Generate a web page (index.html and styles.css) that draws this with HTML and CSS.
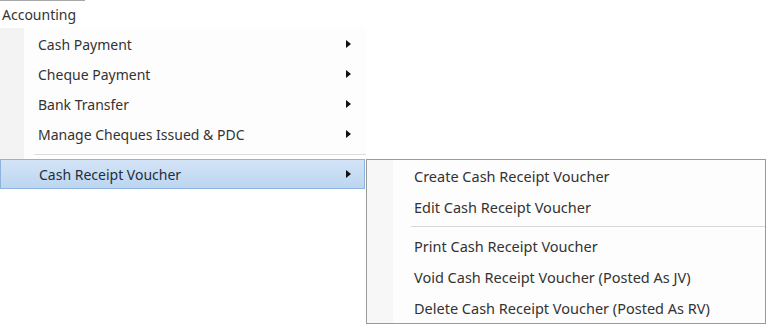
FILE: index.html
```html
<!DOCTYPE html>
<html lang="en">
<head>
    <meta charset="UTF-8">
    <title>Accounting Menu</title>
    <link rel="stylesheet" href="styles.css">
</head>
<body>
    <div class="tab">Accounting</div>

    <div class="menus">
        <ul class="menu">
            <li class="item has-sub">Cash Payment</li>
            <li class="item has-sub">Cheque Payment</li>
            <li class="item has-sub">Bank Transfer</li>
            <li class="item has-sub">Manage Cheques Issued &amp; PDC</li>
            <li class="sep"></li>
            <li class="item has-sub active">Cash Receipt Voucher</li>
        </ul>

        <ul class="submenu">
            <li class="item">Create Cash Receipt Voucher</li>
            <li class="item">Edit Cash Receipt Voucher</li>
            <li class="sep"></li>
            <li class="item">Print Cash Receipt Voucher</li>
            <li class="item">Void Cash Receipt Voucher (Posted As JV)</li>
            <li class="item">Delete Cash Receipt Voucher (Posted As RV)</li>
        </ul>
    </div>
</body>
</html>
```

FILE: styles.css
```css
body {
    margin: 0;
    background: #fff;
    font-family: "Noto Sans", "DejaVu Sans", sans-serif;
    font-size: 14px;
    color: #333;
    width: 768px;
    height: 326px;
    overflow: hidden;
}
ul {
    list-style: none;
    margin: 0;
    padding: 0;
}
.tab {
    width: 85px;
    height: 28px;
    box-sizing: border-box;
    border-top: 1px solid #a8a8a8;
    padding: 4px 0 0 2px;
    line-height: 20px;
}
.menus {
    display: flex;
    align-items: flex-start;
}
.menu {
    width: 366px;
    padding-top: 1px;
    background: linear-gradient(to right, #f3f3f3 24px, #fdfdfd 24px);
}
.menu .item {
    height: 30px;
    line-height: 31px;
    padding-left: 38px;
    position: relative;
}
.menu .sep {
    height: 10px;
    margin-left: 34px;
    background: linear-gradient(#fdfdfd 5px, #dcdcdc 5px, #dcdcdc 6px, #fff 6px);
}
.menu .active {
    background: linear-gradient(#d3e4f7, #bcd5f0);
    border: 1px solid #8eb3de;
    height: 28px;
    line-height: 29px;
    margin-right: 1px;
    color: #1f2d3d;
}
.has-sub::after {
    content: "";
    position: absolute;
    left: 346px;
    top: 50%;
    margin-top: -4px;
    border-left: 5px solid #111;
    border-top: 4px solid transparent;
    border-bottom: 4px solid transparent;
}
.menu .active::after {
    left: 345px;
}
.submenu {
    width: 400px;
    box-sizing: border-box;
    margin-top: 131px;
    border: 1px solid #9a9a9a;
    background: linear-gradient(to right, #f7f7f7 26px, #fdfdfd 26px);
}
.submenu .item {
    height: 31px;
    line-height: 32px;
    padding-left: 47px;
    font-size: 14.5px;
}
.submenu .sep {
    height: 8px;
    margin-left: 44px;
    background: linear-gradient(#fdfdfd 4px, #d6d6d6 4px, #d6d6d6 5px, #fff 5px);
}
```
